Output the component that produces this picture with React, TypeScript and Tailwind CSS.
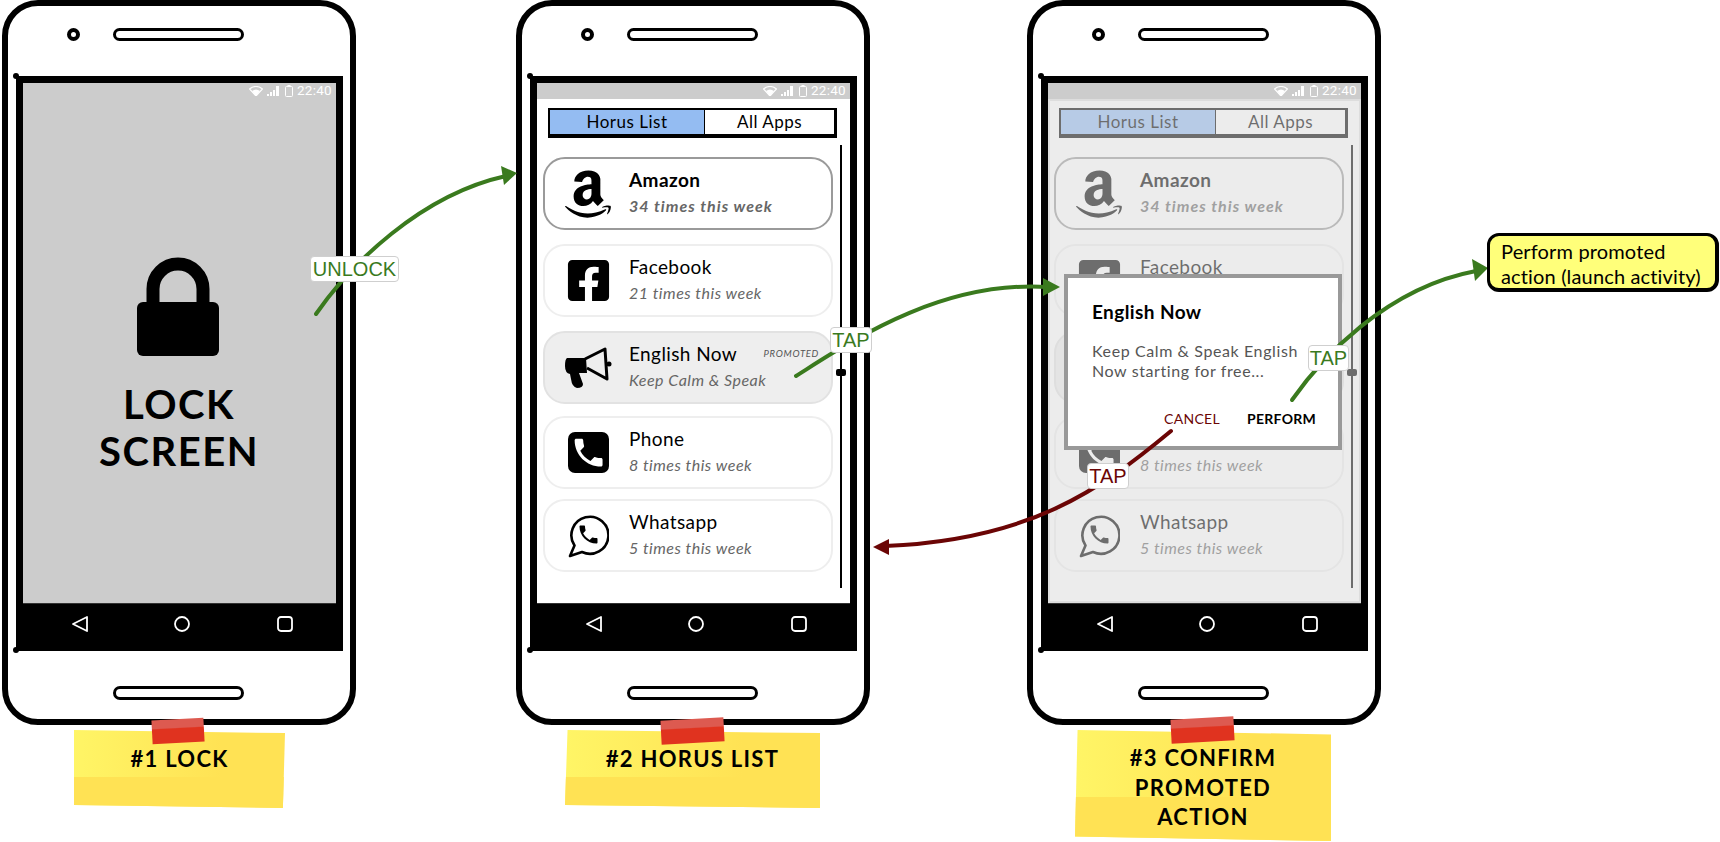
import type { ReactNode } from "react";
import { FaAmazon, FaFacebookSquare } from "react-icons/fa";

const GREEN = "#3a7a1e";
const RED = "#6b0505";

const CALL_PATH =
  "M6.62 10.79c1.44 2.83 3.76 5.14 6.59 6.59l2.2-2.2c.27-.27.67-.36 1.02-.24 1.12.37 2.33.57 3.57.57.55 0 1 .45 1 1V20c0 .55-.45 1-1 1-9.39 0-17-7.61-17-17 0-.55.45-1 1-1h3.5c.55 0 1 .45 1 1 0 1.25.2 2.45.57 3.57.11.35.03.74-.24 1.02l-2.2 2.2z";

function StatusBar({ tinted }: { tinted?: boolean }) {
  return (
    <div
      className={`h-[16px] shrink-0 flex items-center justify-end gap-[3px] pr-[4px] text-white text-[13.5px] leading-none font-normal font-[Roboto,sans-serif] ${
        tinted ? "bg-[#cccccc]" : ""
      }`}
    >
      <svg width="14" height="10" viewBox="0 0 14 10">
        <path d="M0.5 3 Q7 -2 13.5 3 L7 10Z" fill="none" stroke="#fff" strokeWidth="1.2" />
        <path d="M3 5 Q7 2 11 5 L7 10Z" fill="#fff" />
      </svg>
      <svg width="13" height="10" viewBox="0 0 13 10" className="ml-[1px]">
        <path d="M0 8h2v2H0zM3 6h2v4H3zM6 4h2v6H6zM9 0h3v10H9z" fill="#fff" />
      </svg>
      <svg width="8" height="12" viewBox="0 0 8 12" className="ml-[2px]">
        <rect x="0.5" y="1.5" width="7" height="10" rx="1" fill="none" stroke="#fff" />
        <rect x="2.5" y="0" width="3" height="1.5" fill="#fff" />
      </svg>
      <span className="ml-[1px] tracking-[0.3px]">22:40</span>
    </div>
  );
}

function NavBar() {
  return (
    <div className="h-[41px] shrink-0 bg-black border-t border-[#333] flex items-center justify-around pl-[6px]">
      <svg width="18" height="18" viewBox="0 0 18 18">
        <path d="M16 2 L2 9 L16 16Z" fill="none" stroke="#fff" strokeWidth="1.8" strokeLinejoin="round" />
      </svg>
      <svg width="18" height="18" viewBox="0 0 18 18">
        <circle cx="9" cy="9" r="7" fill="none" stroke="#fff" strokeWidth="1.8" />
      </svg>
      <svg width="18" height="18" viewBox="0 0 18 18">
        <rect x="2" y="2" width="14" height="14" rx="3" fill="none" stroke="#fff" strokeWidth="1.8" />
      </svg>
    </div>
  );
}

function Phone({ className, children }: { className: string; children: ReactNode }) {
  return (
    <div className={`absolute top-0 w-[354px] h-[725px] bg-white border-[6px] border-black rounded-[36px] ${className}`}>
      <div className="flex items-center pl-[59px] pt-[22px]">
        <div className="w-[13px] h-[13px] rounded-full border-[4px] border-black" />
        <div className="ml-[33px] w-[131px] h-[13px] rounded-full border-[3px] border-black" />
      </div>
      <div className="relative mt-[35px] ml-[8px] w-[327px] h-[575px] border-[7px] border-black flex flex-col">
        <div className="absolute -left-[10px] -top-[10px] w-[6px] h-[6px] rounded-full bg-black" />
        <div className="absolute -left-[10px] -bottom-[9px] w-[6px] h-[6px] rounded-full bg-black" />
        {children}
        <NavBar />
      </div>
      <div className="mt-[35px] ml-[105px] w-[131px] h-[14px] rounded-full border-[3px] border-black" />
    </div>
  );
}

function LockIcon() {
  return (
    <svg width="82" height="100" viewBox="0 0 82 100">
      <path d="M16 52 V33 A25 25 0 0 1 66 33 V52" fill="none" stroke="#000" strokeWidth="13" />
      <rect x="0" y="46" width="82" height="54" rx="6" fill="#000" />
    </svg>
  );
}

function PhoneGlyph() {
  return (
    <svg width="41" height="41" viewBox="0 0 41 41">
      <rect width="41" height="41" rx="7" fill="#000" />
      <path transform="translate(2 2) scale(1.55)" d={CALL_PATH} fill="#fff" />
    </svg>
  );
}

function WhatsappGlyph() {
  return (
    <svg width="42" height="44" viewBox="0 0 42 44">
      <path
        d="M3 42 L7.5 31.5 A18.5 18.5 0 1 1 15 38 Z"
        fill="none"
        stroke="#000"
        strokeWidth="2.6"
        strokeLinejoin="round"
      />
      <path transform="translate(9.5 8.5) scale(1)" d={CALL_PATH} fill="#000" />
    </svg>
  );
}

function Megaphone() {
  return (
    <svg width="52" height="46" viewBox="8 5 50 44">
      <path d="M12 17 H31 L32 32 H24 L28 43 Q28 47 22 47 Q17 46 16 38 L15 33 Q10 32 10 25 Q10 18 12 17Z" fill="#000" />
      <path d="M30 18 L50 8 L52 38 L32 27" fill="none" stroke="#000" strokeWidth="3" strokeLinejoin="round" />
      <circle cx="54" cy="23" r="2.5" fill="#000" />
    </svg>
  );
}

const apps = [
  {
    name: "Amazon",
    sub: "34 times this week",
    icon: <FaAmazon size={54} />,
    card: "border-[#9a9a9a] bg-white mt-[12px]",
    title: "font-bold",
    subText: "font-bold tracking-[1px]",
  },
  {
    name: "Facebook",
    sub: "21 times this week",
    icon: <FaFacebookSquare size={47} />,
    card: "border-[#eeeeee] bg-white mt-[14px]",
    title: "",
    subText: "",
  },
  {
    name: "English Now",
    sub: "Keep Calm & Speak",
    icon: <Megaphone />,
    card: "border-[#e2e2e2] bg-[#eeeeee] mt-[14px]",
    title: "",
    subText: "",
    promoted: true,
  },
  {
    name: "Phone",
    sub: "8 times this week",
    icon: <PhoneGlyph />,
    card: "border-[#eeeeee] bg-white mt-[12px]",
    title: "",
    subText: "",
  },
  {
    name: "Whatsapp",
    sub: "5 times this week",
    icon: <WhatsappGlyph />,
    card: "border-[#eeeeee] bg-white mt-[10px]",
    title: "",
    subText: "",
  },
];

function HorusList({ dim }: { dim?: boolean }) {
  return (
    <div className="relative flex-1 bg-white px-[6px] pt-[9px]">
      <div className="ml-[5px] w-[289px] h-[30px] flex border-black border-t-2 border-l-2 border-b-[4px] border-r-[3px] text-[17px] tracking-[0.5px] text-black">
        <div className="w-[155px] bg-[#94bcf2] border-r border-black flex items-center justify-center">Horus List</div>
        <div className="flex-1 bg-white flex items-center justify-center">All Apps</div>
      </div>
      <div className="flex mt-[7px]">
        <div className="w-[290px]">
          {apps.map((app) => (
            <div key={app.name} className={`h-[73px] border-2 rounded-[22px] flex ${app.card}`}>
              <div className="ml-[18px] w-[50px] flex items-center justify-center">{app.icon}</div>
              <div className="ml-[16px] pt-[9px] flex-1 pr-[12px]">
                <div className="h-[24px] flex items-center justify-between">
                  <span className={`text-[19px] leading-[24px] tracking-[0.4px] text-black ${app.title}`}>{app.name}</span>
                  {app.promoted && <span className="text-[9.5px] tracking-[0.7px] italic text-[#555]">PROMOTED</span>}
                </div>
                <div className={`mt-[4px] text-[16px] leading-[20px] italic text-[#666] tracking-[0.5px] ${app.subText}`}>{app.sub}</div>
              </div>
            </div>
          ))}
        </div>
        <div className="relative ml-[7px] w-[2px] h-[443px] bg-black">
          <div className="absolute -left-[4px] top-[224px] w-[10px] h-[7px] rounded-[2px] bg-black" />
        </div>
      </div>
      {dim && <div className="absolute inset-0 bg-[#d9d9d9]/50 border-2 border-[#dddddd]" />}
    </div>
  );
}

function Sticky({ className, children }: { className: string; children: ReactNode }) {
  return (
    <div
      className={`absolute text-center font-bold text-black text-[22px] tracking-[1.3px] bg-[linear-gradient(#ffe254,#ffe254),linear-gradient(to_right,#fff566,#ffe254_70%)] bg-[size:100%_40%,100%_100%] bg-bottom bg-no-repeat ${className}`}
    >
      {children}
    </div>
  );
}

function Tape({ className }: { className: string }) {
  return <div className={`absolute h-[24px] -rotate-3 bg-[linear-gradient(#dd5a50,#dd5a50_35%,#e0331f_40%)] ${className}`} />;
}

function TapLabel({ className, children }: { className: string; children: ReactNode }) {
  return (
    <div
      className={`absolute bg-white border border-[#cfcfcf] rounded-[4px] flex items-center justify-center font-[Liberation_Sans,sans-serif] text-[20px] leading-none ${className}`}
    >
      {children}
    </div>
  );
}

function Arrows() {
  return (
    <svg className="absolute inset-0" width="1720" height="842" viewBox="0 0 1720 842" fill="none">
      <g stroke={GREEN} strokeWidth="4" strokeLinecap="round">
        <path d="M316 314 C350 265 420 195 506 176" />
        <path d="M796 376 C850 342 940 280 1048 287" />
        <path d="M1292 400 C1320 360 1385 288 1476 271" />
      </g>
      <g fill={GREEN}>
        <path d="M517 173 L501 166 L504 185Z" />
        <path d="M1060 287 L1043 278 L1043 296Z" />
        <path d="M1488 268 L1472 259 L1475 281Z" />
      </g>
      <path d="M1171 431 C1100 490 1030 540 885 546" stroke={RED} strokeWidth="4" strokeLinecap="round" />
      <path d="M873 547 L889 539 L889 555Z" fill={RED} />
    </svg>
  );
}

export default function App() {
  return (
    <div className="relative w-[1720px] h-[842px] bg-white overflow-hidden font-[Lato,sans-serif]">
      <Phone className="left-[2px]">
        <div className="flex-1 bg-[#cccccc] flex flex-col items-center text-black font-bold">
          <div className="w-full">
            <StatusBar />
          </div>
          <div className="mt-[157px] -ml-[4px]">
            <LockIcon />
          </div>
          <div className="mt-[25px] text-[40px] leading-[47px] tracking-[1.5px] text-center -ml-[1px]">
            LOCK
            <br />
            SCREEN
          </div>
        </div>
      </Phone>

      <Phone className="left-[516px]">
        <StatusBar tinted />
        <HorusList />
      </Phone>

      <Phone className="left-[1027px]">
        <StatusBar tinted />
        <HorusList dim />
        <div className="absolute left-[16px] top-[191px] w-[278px] h-[176px] bg-white border-[4px] border-[#999999] pl-[24px] pt-[22px]">
          <div className="text-[19px] leading-[24px] tracking-[0.4px] font-bold text-black">English Now</div>
          <div className="mt-[17px] text-[16px] leading-[20px] tracking-[0.6px] text-[#555555]">
            Keep Calm &amp; Speak English
            <br />
            Now starting for free...
          </div>
          <div className="mt-[29px] ml-[72px] flex gap-[27px] text-[14px] leading-[18px] tracking-[0.3px]">
            <span className="text-[#6b0505]">CANCEL</span>
            <span className="font-bold text-black">PERFORM</span>
          </div>
        </div>
      </Phone>

      <Sticky className="left-[74px] top-[730px] w-[211px] h-[78px] pt-[16px] leading-[26px] [clip-path:polygon(0_0,100%_4%,99%_100%,0_96%)]">
        #1 LOCK
      </Sticky>
      <Sticky className="left-[565px] top-[730px] w-[255px] h-[78px] pt-[16px] leading-[26px] [clip-path:polygon(1%_0,100%_4%,100%_100%,0_96%)]">
        #2 HORUS LIST
      </Sticky>
      <Sticky className="left-[1075px] top-[730px] w-[256px] h-[111px] pt-[13px] leading-[29.5px] [clip-path:polygon(1%_0,100%_4%,100%_100%,0_96%)]">
        #3 CONFIRM
        <br />
        PROMOTED
        <br />
        ACTION
      </Sticky>
      <Tape className="left-[152px] top-[719px] w-[52px]" />
      <Tape className="left-[661px] top-[719px] w-[63px]" />
      <Tape className="left-[1171px] top-[718px] w-[63px]" />

      <Arrows />

      <TapLabel className="left-[310px] top-[256px] w-[89px] h-[26px]">
        <span className="text-[#3a7a1e]">UNLOCK</span>
      </TapLabel>
      <TapLabel className="left-[830px] top-[327px] w-[42px] h-[26px]">
        <span className="text-[#3a7a1e]">TAP</span>
      </TapLabel>
      <TapLabel className="left-[1308px] top-[345px] w-[41px] h-[26px]">
        <span className="text-[#3a7a1e]">TAP</span>
      </TapLabel>
      <TapLabel className="left-[1087px] top-[463px] w-[42px] h-[26px]">
        <span className="text-[#6b0505]">TAP</span>
      </TapLabel>

      <div className="absolute left-[1487px] top-[233px] w-[232px] h-[59px] bg-[#ffff7a] border-black border-t-[3px] border-l-[3px] border-b-[4px] border-r-[4px] rounded-[12px] pl-[11px] pt-[3px] text-[20px] leading-[25px] tracking-[0.15px] text-black">
        Perform promoted
        <br />
        action (launch activity)
      </div>
    </div>
  );
}
